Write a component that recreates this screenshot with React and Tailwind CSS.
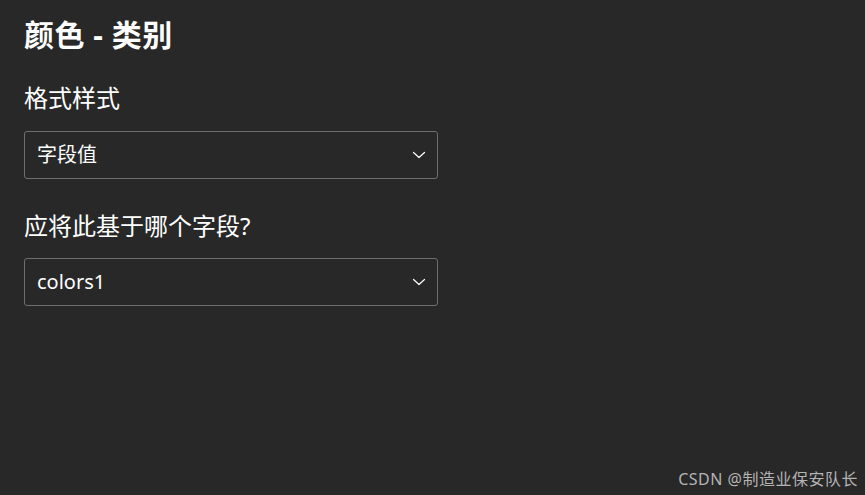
import React from "react";

const Chevron = () => (
  <svg width="14" height="8" viewBox="0 0 14 8" fill="none" className="text-white">
    <path d="M1.5 1.5 L7 6.5 L12.5 1.5" stroke="currentColor" strokeWidth="1.2" strokeLinecap="round" strokeLinejoin="round" />
  </svg>
);

const Select = ({ value }) => (
  <div className="flex items-center justify-between w-[414px] h-[48px] border border-[#6e6e6e] rounded-[3px] pl-[12px] pr-[11px]">
    <span className="text-[20px] text-white leading-[28px]">{value}</span>
    <Chevron />
  </div>
);

export default function App() {
  const font = { fontFamily: '"Noto Sans", "Noto Sans CJK SC", sans-serif' };
  return (
    <div style={font} className="relative w-[865px] h-[495px] bg-[#282828] overflow-hidden">
      <div className="flex flex-col pl-[24px] pt-[15px]">
        <h1 className="text-[30px] font-bold text-white leading-[40px] tracking-[0.5px]">颜色 - 类别</h1>
        <div className="mt-[27px] text-[24px] text-white leading-[32px]">格式样式</div>
        <div className="mt-[17px]">
          <Select value="字段值" />
        </div>
        <div className="mt-[31px] text-[24px] text-white leading-[32px]">应将此基于哪个字段?</div>
        <div className="mt-[16px]">
          <Select value="colors1" />
        </div>
      </div>
      <div className="absolute right-[7px] bottom-[4px] text-[16px] leading-[24px] tracking-[0.5px] text-[#b4b4b4]">CSDN @制造业保安队长</div>
    </div>
  );
}
